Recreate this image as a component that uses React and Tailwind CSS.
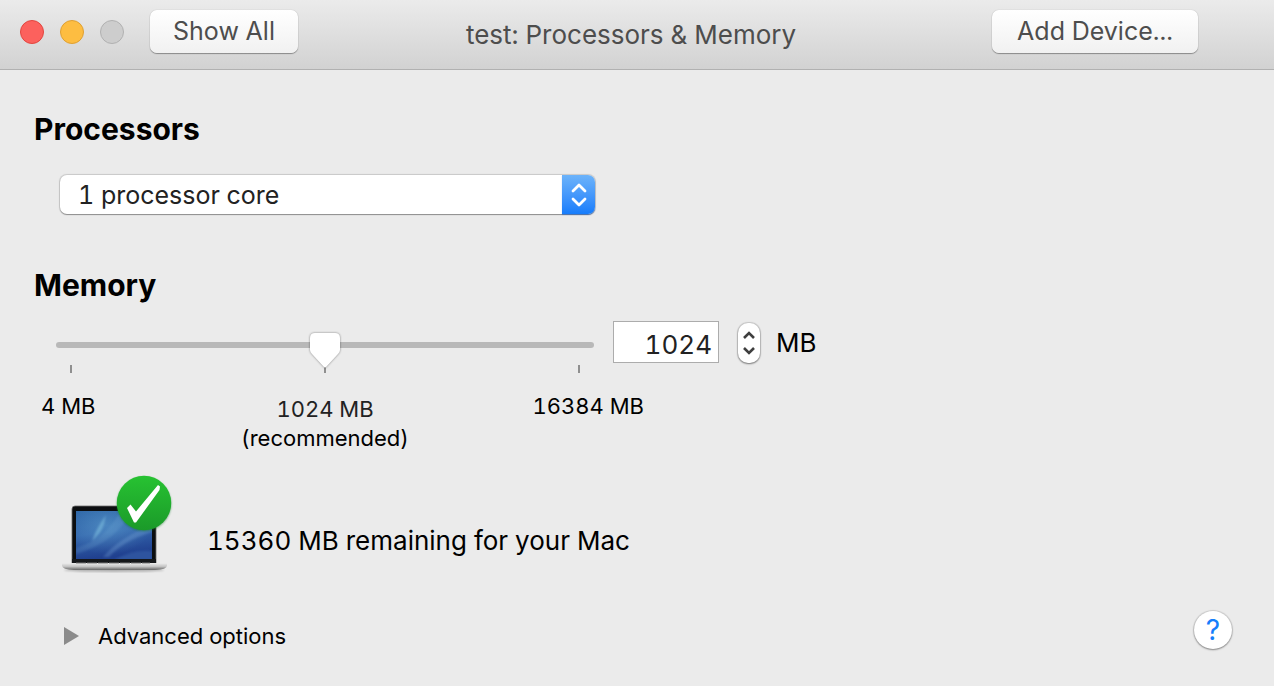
import { useState } from 'react';

const MIN = 4;
const RECOMMENDED = 1024;
const MAX = 16384;

// The recommended amount sits at the middle of the slider; each half is logarithmic.
function toPosition(mb) {
  const value = Math.min(MAX, Math.max(MIN, mb));
  if (value <= RECOMMENDED) {
    return (50 * Math.log(value / MIN)) / Math.log(RECOMMENDED / MIN);
  }
  return 50 + (50 * Math.log(value / RECOMMENDED)) / Math.log(MAX / RECOMMENDED);
}

function toMegabytes(position) {
  const raw =
    position <= 50
      ? MIN * Math.pow(RECOMMENDED / MIN, position / 50)
      : RECOMMENDED * Math.pow(MAX / RECOMMENDED, (position - 50) / 50);
  return Math.round(raw / 4) * 4;
}

function TitleBar() {
  return (
    <header className="flex h-[70px] items-start border-b border-[#b1b1b1] bg-linear-to-b from-[#ebebeb] to-[#d2d2d2] pl-5 pr-[76px] pt-[10px] text-[#4d4d4d]">
      <div className="flex gap-4 pt-[10px]">
        <button aria-label="Close" className="size-6 rounded-full border border-[#e2463f] bg-[#fc615d]" />
        <button aria-label="Minimize" className="size-6 rounded-full border border-[#dfa033] bg-[#fdbd41]" />
        <button aria-label="Zoom" disabled className="size-6 rounded-full border border-[#b1b1b1] bg-[#cdcdcd]" />
      </div>
      <ToolbarButton className="ml-[26px] w-[148px]">Show All</ToolbarButton>
      <h1 className="flex-1 pr-7 pt-2 text-center text-[26px] leading-[34px]">test: Processors &amp; Memory</h1>
      <ToolbarButton className="w-[206px]">Add Device...</ToolbarButton>
    </header>
  );
}

function ToolbarButton({ className, children }) {
  return (
    <button
      className={`${className} h-[43px] rounded-[7px] bg-linear-to-b from-white to-[#f1f1f1] pb-[2px] text-[25px] leading-[40px] shadow-[0_1px_1px_rgba(0,0,0,0.35),0_0_1px_rgba(0,0,0,0.3)]`}
    >
      {children}
    </button>
  );
}

function ProcessorSelect() {
  return (
    <div className="relative ml-[26px] h-[39px] max-w-[535px]">
      <select
        aria-labelledby="processors-heading"
        className="size-full appearance-none rounded-[7px] bg-white pl-[18px] pr-12 pt-[2px] text-[25px] leading-[37px] text-[#222] shadow-[0_1px_1px_rgba(0,0,0,0.3),0_0_1px_1px_rgba(0,0,0,0.15)]"
      >
        <option>1 processor core</option>
        <option>2 processor cores</option>
        <option>4 processor cores</option>
      </select>
      <div className="pointer-events-none absolute inset-y-0 right-0 flex w-[33px] items-center justify-center rounded-r-[7px] bg-linear-to-b from-[#6cb3fa] to-[#157cfb] shadow-[0_1px_1px_rgba(0,80,200,0.5)]">
        <svg width="18" height="26" viewBox="0 0 18 26" fill="none" stroke="white" strokeWidth="2.8" strokeLinecap="round" strokeLinejoin="round">
          <path d="M3 9 9 3l6 6M3 17l6 6 6-6" />
        </svg>
      </div>
    </div>
  );
}

function Stepper({ onStep }) {
  return (
    <div className="ml-[19px] mt-[2px] flex h-10 w-[22px] flex-col overflow-hidden rounded-[10px] bg-white text-[#3f3f3f] shadow-[0_1px_2px_rgba(0,0,0,0.4),0_0_1px_1px_rgba(0,0,0,0.14)]">
      <button aria-label="Increase memory" onClick={() => onStep(4)} className="flex flex-1 items-center justify-center pt-1">
        <svg width="12" height="8" viewBox="0 0 12 8" fill="none" stroke="currentColor" strokeWidth="2.6">
          <path d="M1 7 6 2l5 5" />
        </svg>
      </button>
      <button aria-label="Decrease memory" onClick={() => onStep(-4)} className="flex flex-1 items-center justify-center pb-1">
        <svg width="12" height="8" viewBox="0 0 12 8" fill="none" stroke="currentColor" strokeWidth="2.6">
          <path d="M1 1l5 5 5-5" />
        </svg>
      </button>
    </div>
  );
}

function MemoryControls({ memory, setMemory }) {
  return (
    <>
      <div className="ml-[22px] flex items-start">
        <div className="min-w-0 max-w-[538px] flex-1 pt-[21px]">
          <input
            type="range"
            aria-labelledby="memory-heading"
            min="0"
            max="100"
            step="any"
            value={toPosition(memory)}
            onChange={(e) => setMemory(toMegabytes(Number(e.target.value)))}
            className="relative z-10 block h-[6px] w-full appearance-none rounded-full bg-[#b8b8b8] [&::-webkit-slider-runnable-track]:h-[6px] [&::-webkit-slider-runnable-track]:[filter:drop-shadow(0_0_1px_rgba(0,0,0,0.45))] [&::-webkit-slider-thumb]:-mt-[9px] [&::-webkit-slider-thumb]:h-9 [&::-webkit-slider-thumb]:w-[30px] [&::-webkit-slider-thumb]:appearance-none [&::-webkit-slider-thumb]:bg-white [&::-webkit-slider-thumb]:[clip-path:path('M5_0H25Q30_0_30_5V17Q30_19_28_21L16_34Q15_35_14_34L2_21Q0_19_0_17V5Q0_0_5_0Z')]"
          />
          <div className="flex justify-between px-[14px] pt-[17px]">
            <span className="h-2 w-[2px] bg-[#8f8f8f]" />
            <span className="h-2 w-[2px] bg-[#8f8f8f]" />
            <span className="h-2 w-[2px] bg-[#8f8f8f]" />
          </div>
        </div>
        <input
          type="text"
          inputMode="numeric"
          aria-label="Memory in megabytes"
          value={memory}
          onChange={(e) => setMemory(Number(e.target.value.replace(/\D/g, '')))}
          className="ml-[19px] h-[42px] w-[106px] border border-[#acacac] bg-white pr-[6px] pt-1 text-right text-[26px] leading-8 text-[#222]"
        />
        <Stepper onStep={(d) => setMemory(Math.min(MAX, Math.max(MIN, memory + d)))} />
        <span className="ml-4 pt-px text-[26px] leading-[42px]">MB</span>
      </div>
      <div className="ml-[7px] mt-[19px] grid max-w-[603px] grid-cols-[180px_208px_1fr] text-[22px] leading-[29px]">
        <span>4 MB</span>
        <span className="pt-[3px] text-center">
          <span className="text-[#222]">1024 MB</span>
          <br />
          (recommended)
        </span>
        <span className="text-right">16384 MB</span>
      </div>
    </>
  );
}

function LaptopIcon() {
  return (
    <svg width="114" height="102" viewBox="0 0 114 102" aria-hidden="true">
      <defs>
        <linearGradient id="screen" x1="0" y1="0" x2="0.2" y2="1">
          <stop offset="0" stopColor="#2c63a5" />
          <stop offset="0.5" stopColor="#3467ad" />
          <stop offset="1" stopColor="#20408f" />
        </linearGradient>
        <linearGradient id="base" x1="0" y1="0" x2="0" y2="1">
          <stop offset="0" stopColor="#eeeeee" />
          <stop offset="0.5" stopColor="#c4c4c4" />
          <stop offset="1" stopColor="#666666" />
        </linearGradient>
        <linearGradient id="badge" x1="0" y1="0" x2="0" y2="1">
          <stop offset="0" stopColor="#27c232" />
          <stop offset="1" stopColor="#1b9a29" />
        </linearGradient>
        <radialGradient id="glow" cx="0.4" cy="0.3" r="0.6">
          <stop offset="0" stopColor="#6fb4dc" stopOpacity="0.4" />
          <stop offset="1" stopColor="#6fb4dc" stopOpacity="0" />
        </radialGradient>
        <clipPath id="panel">
          <path d="M16 36h76v48H16Z" />
        </clipPath>
        <filter id="soft">
          <feGaussianBlur stdDeviation="0.9" />
        </filter>
      </defs>
      <ellipse cx="54" cy="95" rx="50" ry="2" fill="#000" opacity="0.25" filter="url(#soft)" />
      <path d="M12 88V34q0-3 3-3h78q3 0 3 3v54Z" fill="#0c0e10" stroke="#6c6c6c" strokeWidth="0.8" />
      <path d="M16 36h76v48H16Z" fill="url(#screen)" />
      <g clipPath="url(#panel)">
        <path d="M16 36h76v48H16Z" fill="url(#glow)" />
        <g filter="url(#soft)">
          <path d="M46 40Q36 54 32 66 41 59 44 49Z" fill="#8ed0e8" opacity="0.45" />
          <path d="M16 79Q50 69 66 45l5-8H60Q46 64 16 73Z" fill="#7fb6dc" opacity="0.2" />
          <path d="M43 82Q60 62 92 50v7Q63 66 49 82Z" fill="#8bbce6" opacity="0.25" />
          <path d="M54 85Q73 74 92 76v9Z" fill="#4b80c4" opacity="0.3" />
        </g>
      </g>
      <path d="M12 84h84v4H12Z" fill="#15171a" />
      <path d="M2 88h105v2.500q0 4-12 4.500H14q-12-.5-12-4.500Z" fill="url(#base)" />
      <path d="M16 88h74" stroke="#777777" strokeWidth="1" strokeDasharray="10 1" />
      <circle cx="84" cy="29" r="27" fill="#127a20" opacity="0.6" filter="url(#soft)" />
      <circle cx="84" cy="28" r="27.200" fill="url(#badge)" />
      <path d="m67 33 3.500-3.500L76 36.500 98 10l2 1.500-.5 3.500L76 47.500h-2Z" fill="white" />
    </svg>
  );
}

export default function App() {
  const [memory, setMemory] = useState(RECOMMENDED);
  const remaining = MAX - memory;

  return (
    <div className="flex min-h-screen flex-col bg-[#ebebeb] font-[Inter,'Liberation_Sans',sans-serif] tabular-nums text-black">
      <TitleBar />
      <main className="flex flex-1 flex-col pl-[34px] pr-[42px] pt-10">
        <h2 id="processors-heading" className="text-[30px] font-bold leading-[39px]">
          Processors
        </h2>
        <div className="pt-[26px]">
          <ProcessorSelect />
        </div>
        <h2 id="memory-heading" className="pt-[52px] text-[30px] font-bold leading-[39px]">
          Memory
        </h2>
        <div className="pt-4">
          <MemoryControls memory={memory} setMemory={setMemory} />
        </div>
        <div className="ml-[26px] flex items-end gap-[33px] pt-[22px]">
          <LaptopIcon />
          <p className="pb-[18px] text-[26px] leading-[36px]">{remaining} MB remaining for your Mac</p>
        </div>
        <div className="flex items-center justify-between pl-[30px] pt-[33px]">
          <button className="flex items-center gap-[19px] pt-3 text-[22px] leading-[28px]">
            <svg width="15" height="18" viewBox="0 0 15 18" aria-hidden="true">
              <path d="M0 0v18l15-9Z" fill="#8b8b8b" />
            </svg>
            Advanced options
          </button>
          <button
            aria-label="Help"
            className="size-[38px] rounded-full bg-white text-[28px] leading-[38px] text-[#157efb] shadow-[0_1px_2px_rgba(0,0,0,0.35),0_0_1px_1px_rgba(0,0,0,0.12)]"
          >
            ?
          </button>
        </div>
      </main>
    </div>
  );
}
